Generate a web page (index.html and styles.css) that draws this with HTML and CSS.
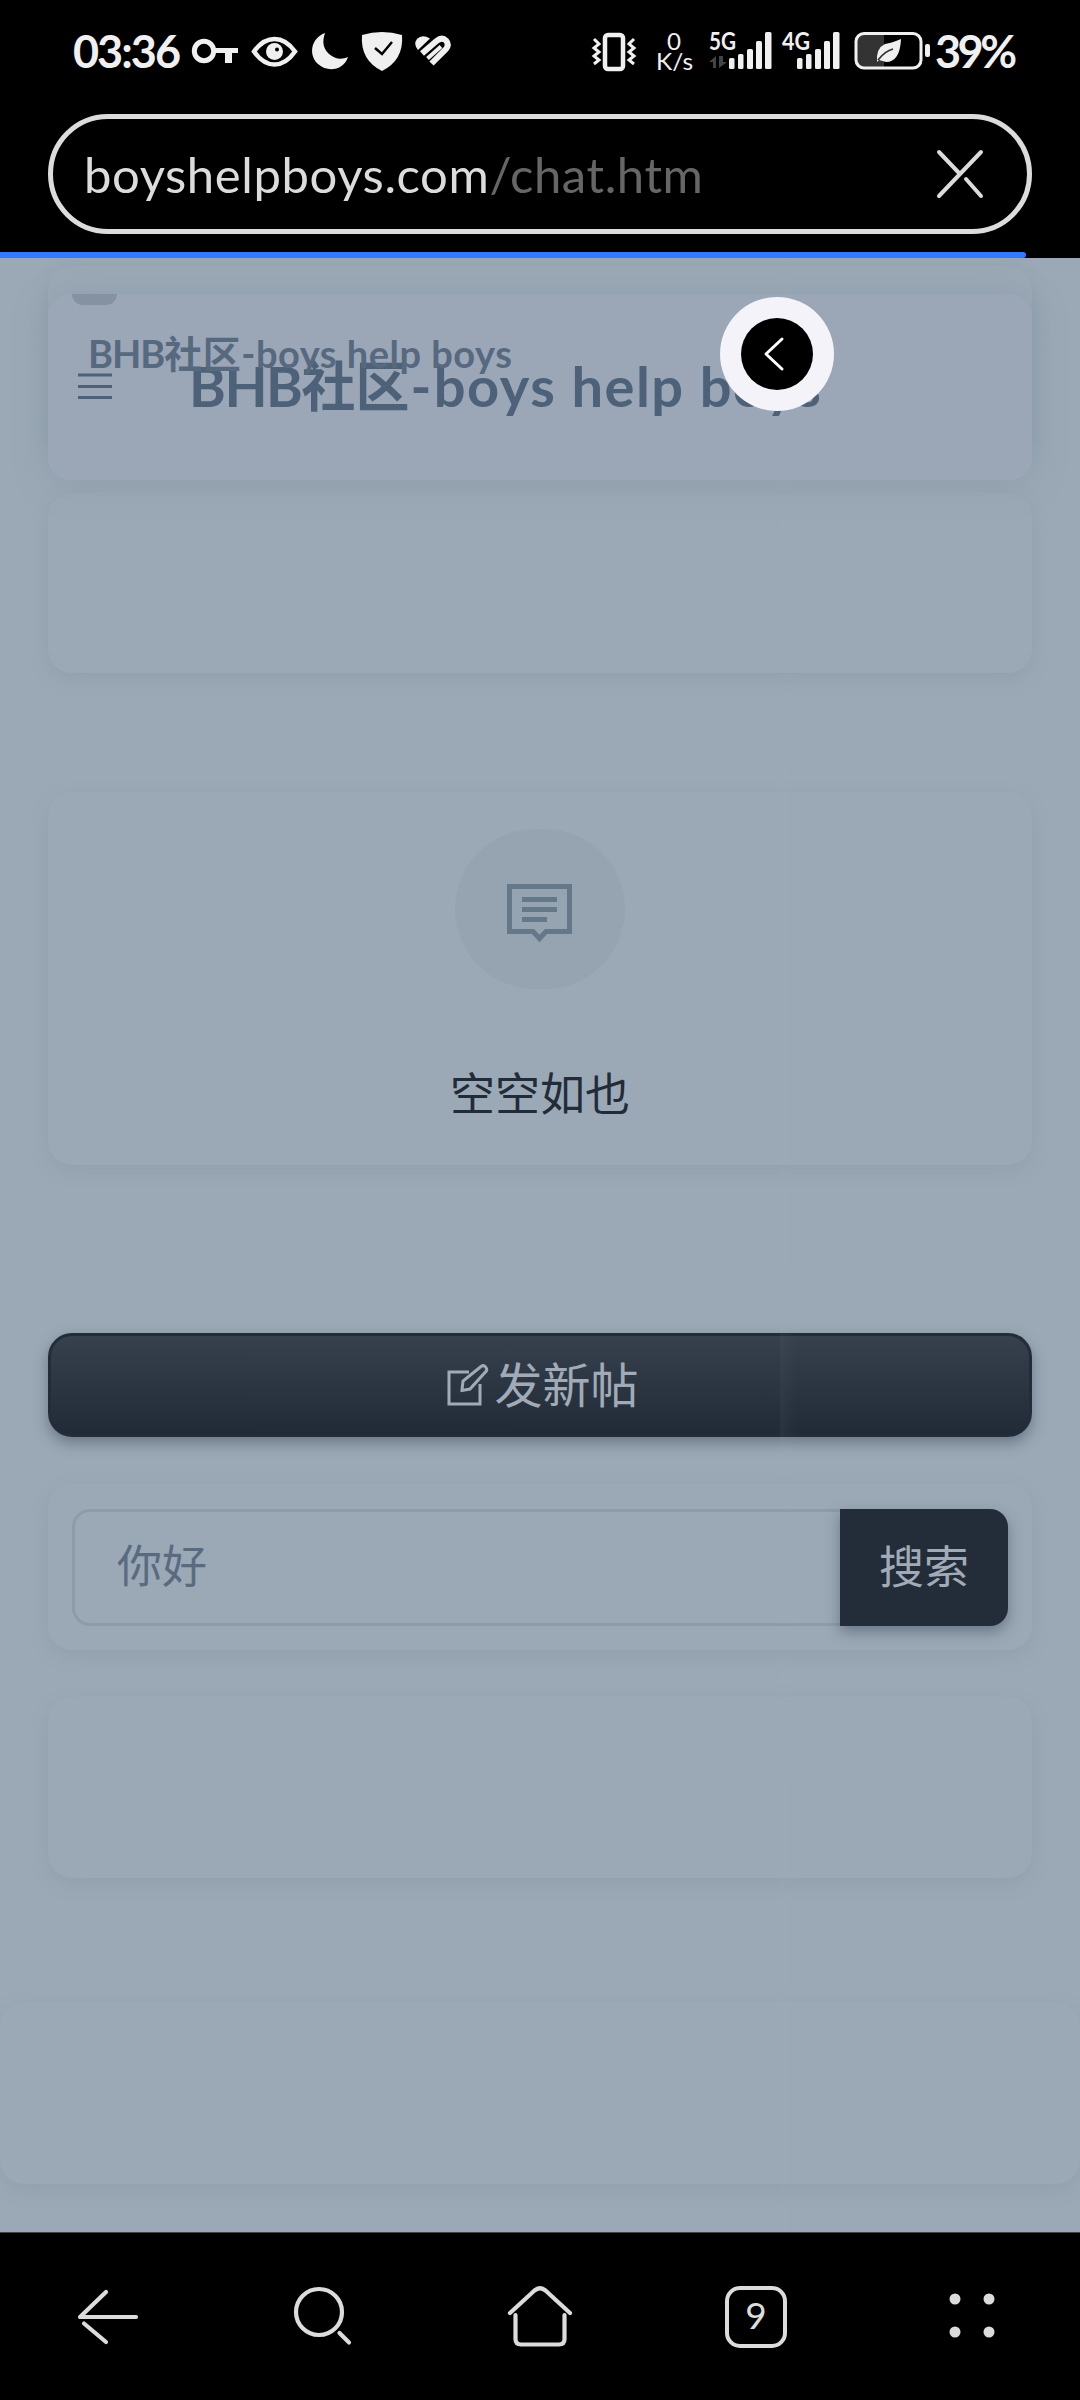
FILE: index.html
```html
<!DOCTYPE html>
<html lang="zh-CN">
<head>
<meta charset="utf-8">
<title>BHB社区-boys help boys</title>
<link rel="stylesheet" href="styles.css">
</head>
<body>
<div class="screen">
  <header class="browser-top">
    <div class="status">
      <span class="clock">03:36</span>
      <svg class="status-left" width="264" height="50" viewBox="190 26 264 50" fill="#f0f0f0">
        <circle cx="204" cy="51" r="9.7" fill="none" stroke="#f0f0f0" stroke-width="5"/>
        <path d="M214 48h24v5h-6v10h-7v-10h-11z"/>
        <path d="M254 51.500Q263 39 274.500 39T295 51.500Q286 64.500 274.500 64.500T254 51.500z" fill="none" stroke="#f0f0f0" stroke-width="4.500"/>
        <circle cx="274.500" cy="51.500" r="8.500"/><circle cx="277" cy="49.500" r="2" fill="#000"/>
        <path d="M325 33C311 38 308 55 318 64C328 73 344 70 348 57C341 60 335 59 329 54C323 48 322 42 325 33z"/>
        <path d="M362 35Q382 29 402 35Q404 60 382 71Q360 60 362 35z"/>
        <path d="M375 48l7 6 10-12" fill="none" stroke="#000" stroke-width="2.500"/>
        <path d="M418 50Q413 44 417 39Q422 34 430 38.500z"/>
        <path d="M422 53.500L436.500 41Q442 36.500 446 40.500Q449.500 44.500 446 49L431.500 63.500" fill="none" stroke="#f0f0f0" stroke-width="6"/>
        <path d="M427.500 58.500L441 46.500" fill="none" stroke="#f0f0f0" stroke-width="4"/>
      </svg>
      <svg class="status-right" width="342" height="50" viewBox="590 26 342 50" fill="#f0f0f0">
        <rect x="605" y="35" width="18" height="34" rx="3" fill="none" stroke="#f0f0f0" stroke-width="4.500"/>
        <path d="M594 39l5 5-5 4 5 4-5 4 5 4-5 4M634 39l-5 5 5 4-5 4 5 4-5 4 5 4" fill="none" stroke="#f0f0f0" stroke-width="3"/>
        <text x="667" y="50" font-size="24" textLength="14" lengthAdjust="spacingAndGlyphs">0</text>
        <text x="656" y="70" font-size="24" textLength="37" lengthAdjust="spacingAndGlyphs">K/s</text>
        <text class="net" x="709" y="50" font-size="25" textLength="27" lengthAdjust="spacingAndGlyphs">5G</text>
        <text class="net" x="782" y="50" font-size="25" textLength="28" lengthAdjust="spacingAndGlyphs">4G</text>
        <path d="M709 62l7-6v12h-3v-6zM719 56v12l8-6h-4v-6z" fill="#444"/>
        <g><rect x="729" y="58" width="5.500" height="11" rx="1.500"/><rect x="738" y="54" width="5.500" height="15" rx="1.500"/><rect x="747" y="49" width="6" height="20" rx="1.500"/><rect x="756" y="41" width="6" height="28" rx="1.500"/><rect x="765" y="32" width="6.500" height="37" rx="1.500"/></g>
        <g><rect x="797" y="58" width="5.500" height="11" rx="1.500"/><rect x="806" y="54" width="5.500" height="15" rx="1.500"/><rect x="815" y="49" width="6" height="20" rx="1.500"/><rect x="824" y="41" width="6" height="28" rx="1.500"/><rect x="833" y="32" width="6.500" height="37" rx="1.500"/></g>
        <path d="M864 34h20v34h-20q-8-2-8-8V42q0-7 8-8z" fill="#333"/>
        <rect x="856" y="33.500" width="65" height="34.500" rx="8" fill="none" stroke="#f0f0f0" stroke-width="3"/>
        <rect x="925" y="44" width="5" height="13" rx="2"/>
        <path d="M901 39Q900 62 886 62L879 60L877 62Q876 48 885 44Q892 43 901 39z"/>
        <path d="M878 60Q885 51 893 49" fill="none" stroke="#333" stroke-width="1.800"/>
      </svg>
      <span class="percent">39%</span>
    </div>
    <div class="url"><span class="address">boyshelpboys.com<span class="path">/chat.htm</span></span>
      <svg width="46" height="48" viewBox="0 0 46 48" fill="none" stroke="#dcdcdc" stroke-width="4" stroke-linecap="round"><path d="M2 46L44 2M2 2l20 21M29 29l15 17"/></svg>
    </div>
    <div class="progress"></div>
  </header>

  <main class="page">
    <div class="site-header">
      <span class="tab"></span>
      <svg class="menu" width="34" height="28" viewBox="0 0 34 28" fill="#4d6278"><path d="M0 1.500h34v3H0zM0 13h34v3H0zM0 24h34v3H0z"/></svg>
      <h1 class="title"><span class="latin">BHB</span><span class="han">社区</span><span class="dash">-</span>boys help boys</h1>
      <div class="crumb"><span class="latin">BHB</span>社区-boys help boys</div>
    </div>
    <section class="card lead"></section>
    <section class="card block"></section>
    <section class="card empty">
      <div class="bubble"><svg width="66" height="60" viewBox="0 0 66 60" fill="none" stroke="#65788a" stroke-width="5"><path d="M2.500 2.500h60v45H39l-6.500 7-6.500-7H2.500zM15 15.500h35M15 25.500h35M15 35.500h25"/></svg></div>
      <p class="empty-text">空空如也</p>
    </section>
    <button class="post"><svg width="42" height="42" viewBox="0 0 42 42" fill="none" stroke="#a1abb8" stroke-width="3"><path d="M22 8H2v32h31V20M15 26l1-9L34 2.500q3-2 5 1t-1 5L23 25l-8 1.500z"/></svg><span>发新帖</span></button>
    <section class="card search">
      <div class="field">你好</div>
      <button class="go">搜索</button>
    </section>
    <section class="card block second"></section>
    <section class="card block footer"></section>
    <div class="seam"></div>
  </main>

  <nav class="bottom">
    <svg width="62" height="64" viewBox="77 2285 62 64"><path d="M106 2292L80 2317H136M84 2323.500L106 2342"/></svg>
    <svg width="62" height="64" viewBox="293 2285 62 64"><circle cx="319" cy="2312" r="23"/><path d="M339.500 2333L349 2342.500"/></svg>
    <svg width="64" height="64" viewBox="508 2285 64 64"><path d="M510 2313L534.500 2290.500Q540 2286 545.500 2290.500L570 2313M515.500 2315V2339Q515.500 2344.500 521 2344.500H559Q564.500 2344.500 564.500 2339V2315"/></svg>
    <span class="tabs">9</span>
    <svg class="dots" width="50" height="50" viewBox="947 2292 50 50"><circle cx="955" cy="2299" r="5.500"/><circle cx="989" cy="2299" r="5.500"/><circle cx="955" cy="2332" r="5.500"/><circle cx="989" cy="2332" r="5.500"/></svg>
  </nav>

  <div class="assist"><div class="assist-core"><svg width="24" height="36" viewBox="0 0 24 36" fill="none" stroke="#fff" stroke-width="3" stroke-linecap="round" stroke-linejoin="round"><path d="M19 3L3 18l16 15"/></svg></div></div>
</div>
</body>
</html>
```

FILE: styles.css
```css
* { box-sizing: border-box; }
body { margin: 0; background: #000; font-family: Lato, "Noto Sans CJK SC", sans-serif; }
button { font: inherit; border: 0; padding: 0; }
svg { display: block; flex: none; overflow: visible; }
.screen { position: relative; width: 1080px; height: 2400px; display: flex; flex-direction: column; overflow: hidden; }

/* Browser chrome */
.browser-top { height: 258px; background: #000; display: flex; flex-direction: column; }
.status { height: 114px; padding: 26px 60px 0 73px; display: flex; align-items: flex-start; color: #f0f0f0; }
.clock, .percent { font-weight: 700; font-size: 45px; line-height: 50px; white-space: nowrap; }
.clock { width: 117px; letter-spacing: -2px; }
.percent { width: 84px; margin-left: 3px; letter-spacing: -3.500px; }
.status-right { margin-left: 136px; }
.net { font-weight: 700; }
.url { height: 120px; margin: 0 48px; border: 5px solid #dcdcdc; border-radius: 60px; padding: 0 44px 0 31px; display: flex; align-items: center; justify-content: space-between; color: #dcdcdc; font-size: 49px; letter-spacing: .6px; }
.address { white-space: nowrap; }
.path { color: #666; }
.progress { margin-top: 18px; width: 1026px; height: 6px; background: #327aff; border-radius: 0 3px 3px 0; }

/* Page under the loading veil */
.page { position: relative; z-index: 0; height: 1974px; padding: 8px 48px 0; background: #9ba9b6; display: flex; flex-direction: column; overflow: hidden; }
.card { flex: none; border-radius: 24px; background: #9ba9b6; box-shadow: 0 6px 18px rgba(110, 125, 145, .2); }
.lead { height: 182px; margin-bottom: 45px; }
.block { height: 180px; }
.empty { margin-top: 119px; height: 373px; padding-top: 37px; display: flex; flex-direction: column; align-items: center; }
.bubble { width: 170px; height: 160px; border-radius: 80px; background: #96a3b0; display: flex; align-items: center; justify-content: center; padding-top: 9px; }
.empty-text { margin: 72px 0 0; font-size: 45px; line-height: 66px; color: #222c38; }
.post { flex: none; margin-top: 168px; height: 104px; padding: 0 0 6px 6px; border: 3px solid #232d39; border-radius: 24px; background: linear-gradient(#36414d, #212b37); box-shadow: 0 6px 14px rgba(60, 72, 92, .5); color: #a1abb8; font-size: 48px; display: flex; align-items: center; justify-content: center; gap: 5px; }
.post svg { margin-top: 5px; }
.search { margin-top: 47px; height: 166px; padding: 25px 24px 24px; display: flex; }
.field { flex: 1; border: 3px solid #8e9ba9; border-right: 0; border-radius: 18px 0 0 18px; padding-left: 42px; font-size: 45px; line-height: 109px; color: #5a6b81; }
.go { width: 168px; padding-bottom: 6px; border-radius: 0 18px 18px 0; background: #232d39; color: #a1abb8; font-size: 45px; box-shadow: 0 6px 14px rgba(60, 72, 92, .5); }
.second { margin-top: 47px; height: 181px; }
.footer { margin: 124px -48px 0; height: 182px; }

/* Site header floats over the first card */
.site-header { position: absolute; z-index: 1; left: 48px; top: 36px; width: 984px; height: 186px; border-radius: 22px; background: #9ba7b7; box-shadow: 0 3px 36px rgba(110, 125, 142, .26); padding-left: 30px; display: flex; align-items: flex-start; }
.menu { margin-top: 78px; }
.title { margin: 56px 0 0 77px; font-size: 56px; line-height: 72px; font-weight: 700; color: #4d6278; white-space: nowrap; letter-spacing: 1.500px; }
.title .latin { letter-spacing: -1.500px; }
.title .han { font-size: 54px; letter-spacing: 0; }
.title .dash { margin: 0 1px; }
.crumb { position: absolute; left: 40px; top: 33px; font-size: 38px; line-height: 52px; font-weight: 700; color: #57697f; white-space: nowrap; letter-spacing: .5px; }
.crumb .latin { letter-spacing: -1px; }
.tab { position: absolute; left: 24px; top: 0; width: 45px; height: 11px; border-radius: 0 0 11px 11px; background: #8592a1; }
.seam { position: absolute; z-index: 2; left: 780px; top: 0; bottom: 0; width: 17px; background: linear-gradient(90deg, rgba(165, 165, 178, .06), transparent); }

/* Navigation bar */
.bottom { height: 168px; border-top: 1px solid #444; background: #000; display: grid; grid-template-columns: repeat(5, 1fr); justify-items: center; align-items: center; }
.bottom svg { fill: none; stroke: #dcdcdc; stroke-width: 4.200; stroke-linecap: round; stroke-linejoin: round; }
.bottom .dots { fill: #dcdcdc; stroke: none; }
.tabs { width: 62px; height: 62px; border: 4px solid #dcdcdc; border-radius: 15px; color: #dcdcdc; font-size: 37px; line-height: 50px; text-align: center; }

/* Floating assistant */
.assist { position: absolute; z-index: 1; left: 720px; top: 297px; width: 114px; height: 114px; border-radius: 50%; background: #f4f3f9; display: flex; align-items: center; justify-content: center; }
.assist-core { width: 72px; height: 72px; border-radius: 50%; background: #000; display: flex; align-items: center; justify-content: center; padding-right: 5px; }
```
